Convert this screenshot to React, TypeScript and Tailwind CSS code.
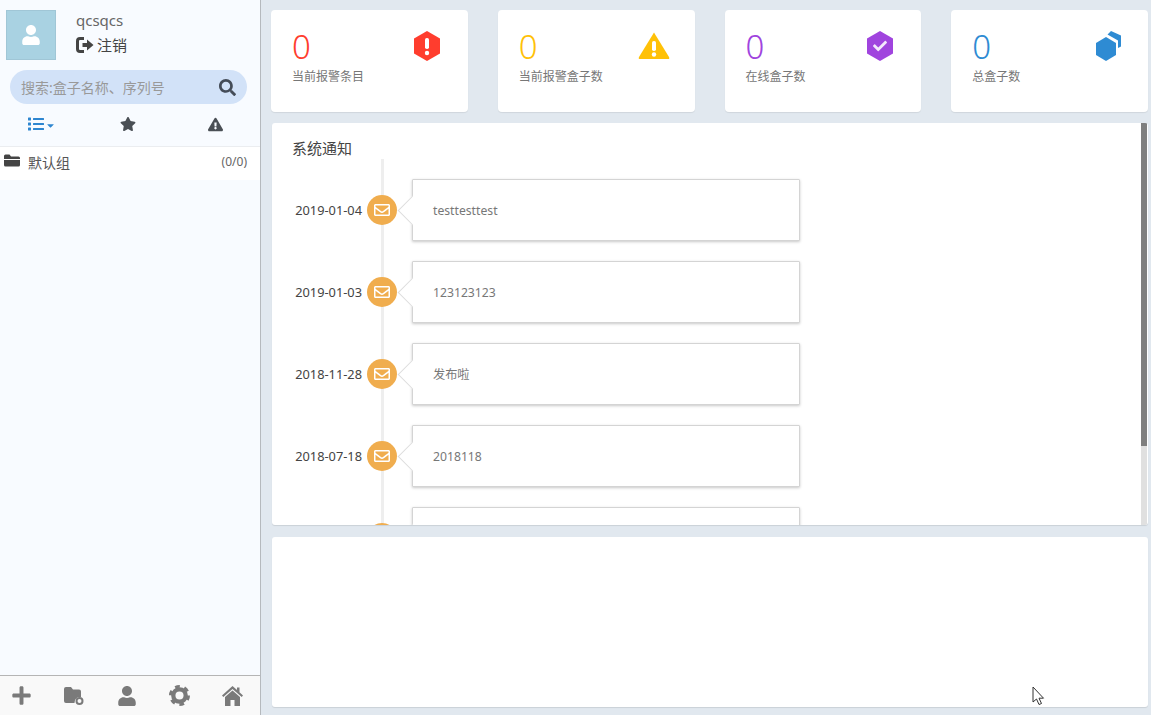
import React from 'react';
import { FaUser, FaSearch, FaList, FaCaretDown, FaStar, FaExclamationTriangle, FaPlus, FaRegEnvelope, FaCheck } from 'react-icons/fa';

const HEX = '15,0 28,7.5 28,22.5 15,30 2,22.5 2,7.5';

const StatCard = ({ value, label, color, icon }: { value: string; label: string; color: string; icon: React.ReactNode }) => (
    <div className="h-[102px] bg-white rounded-[4px] shadow-[0_1px_1px_rgba(0,0,0,0.08)] pl-[21px] pr-[26px] pt-[16px] flex justify-between">
        <div>
            <div className={`text-[33px] leading-[42px] font-light ${color}`}>{value}</div>
            <div className="text-[12px] leading-[18px] text-[#777]">{label}</div>
        </div>
        <div className="w-[30px] h-[30px] mt-[5px]">{icon}</div>
    </div>
);

const Notice = ({ date, text }: { date: string; text: string }) => (
    <div className="flex items-center h-[62px] mb-[20px] shrink-0">
        <div className="w-[70px] pt-[2px] text-[12.8px] text-[#444] text-right whitespace-nowrap">{date}</div>
        <div className="ml-[5px] w-[30px] h-[30px] rounded-full bg-[#f0ad4e] flex items-center justify-center relative z-10">
            <FaRegEnvelope className="text-white text-[16px]" />
        </div>
        <div className="ml-[15px] w-[388px] h-[62px] relative bg-white border border-[#d4d4d4] rounded-[1px] shadow-[0_1px_3px_rgba(0,0,0,0.22)] flex items-center pl-[20px] pt-[2px] text-[12.2px] text-[#777]">
            <div className="absolute left-[-11px] top-[20px] w-[21px] h-[21px] rotate-45 bg-white border-l border-b border-[#ddd]" />
            <span className="relative">{text}</span>
        </div>
    </div>
);

export default function App() {
    const notices = [
        { date: '2019-01-04', text: 'testtesttest' },
        { date: '2019-01-03', text: '123123123' },
        { date: '2018-11-28', text: '发布啦' },
        { date: '2018-07-18', text: '2018118' },
        { date: '', text: '' },
    ];

    return (
        <div className="relative flex w-[1151px] h-[715px] overflow-hidden bg-[#e1e8ef] font-['Noto_Sans','Noto_Sans_CJK_SC',sans-serif]">
            <aside className="w-[261px] shrink-0 h-full bg-[#f8fbff] border-r border-[#b5b9bd] flex flex-col">
                <div className="flex pl-[6px] pt-[10px] h-[70px]">
                    <div className="w-[50px] h-[50px] bg-[#a9d2e2] border border-[#a0c6d6] flex items-center justify-center">
                        <FaUser className="text-white text-[20px]" />
                    </div>
                    <div className="ml-[20px]">
                        <div className="text-[15px] leading-[22px] -mt-[1px] text-[#666]">qcsqcs</div>
                        <div className="flex items-center mt-[3px] text-[15px] leading-[22px] text-[#444]">
                            <svg viewBox="0 0 18 16" className="w-[18px] h-[16px] mr-[3px]">
                                <path d="M8 1.5 H4 Q1.5 1.5 1.5 4 V12 Q1.5 14.5 4 14.5 H8" fill="none" stroke="#444" strokeWidth="3" />
                                <path d="M6.5 6 H11 V2.5 L17.5 8 L11 13.5 V10 H6.5 Z" fill="#444" />
                            </svg>
                            注销
                        </div>
                    </div>
                </div>
                <div className="ml-[10px] w-[237px] h-[34px] rounded-full bg-[#d2e2f8] flex items-center justify-between pl-[11px] pr-[11px]">
                    <span className="text-[14px] text-[#999]">搜索:盒子名称、序列号</span>
                    <FaSearch className="text-[17px] text-[#444c58]" />
                </div>
                <div className="h-[43px] pb-[2px] flex border-b border-[#ebedf0]">
                    <div className="w-[86px] pl-[28px] flex items-center text-[#2e86d0]">
                        <FaList className="text-[16px]" />
                        <FaCaretDown className="text-[11px] ml-[1px] mt-[3px]" />
                    </div>
                    <div className="w-[84px] pl-[34px] flex items-center text-[#4a4f55]">
                        <FaStar className="text-[16px]" />
                    </div>
                    <div className="pl-[38px] flex items-center text-[#4a4f55]">
                        <FaExclamationTriangle className="text-[15px]" />
                    </div>
                </div>
                <div className="h-[33px] pb-[3px] bg-white flex items-center justify-between pl-[4px] pr-[13px]">
                    <div className="flex items-center">
                        <svg viewBox="0 0 16 13" className="w-[16px] h-[13px] mb-[3px]">
                            <path d="M0 2 Q0 0.5 1.5 0.5 H5.5 L7 2.5 H14.5 Q16 2.5 16 4 V5 H0 Z" fill="#444" />
                            <path d="M0 6 H16 V11 Q16 12.5 14.5 12.5 H1.5 Q0 12.5 0 11 Z" fill="#444" />
                        </svg>
                        <span className="ml-[8px] text-[14px] text-[#555]">默认组</span>
                    </div>
                    <span className="text-[12px] text-[#666]">(0/0)</span>
                </div>
                <div className="flex-1" />
                <div className="h-[40px] bg-[#f9f9f9] border-t border-[#b5b5b5] flex items-center text-[#7a7a7a]">
                    <div className="w-[42px] flex justify-center"><FaPlus className="text-[21px]" /></div>
                    <div className="ml-[5px] w-[53px] flex justify-center">
                        <svg viewBox="0 0 20 18" className="w-[20px] h-[18px]">
                            <path d="M0 2 Q0 0 2 0 H7 L9 2.5 H15 Q17 2.5 17 4.5 V10 A5.5 5.5 0 0 0 10.5 16 H2 Q0 16 0 14 Z" fill="#7a7a7a" />
                            <circle cx="15.5" cy="14" r="3" fill="none" stroke="#7a7a7a" strokeWidth="2" />
                        </svg>
                    </div>
                    <div className="w-[53px] flex justify-center"><FaUser className="text-[20px]" /></div>
                    <div className="w-[53px] flex justify-center">
                        <svg viewBox="0 0 22 22" className="w-[21px] h-[21px]">
                            <circle cx="11" cy="11" r="6.5" fill="none" stroke="#7a7a7a" strokeWidth="4.5" />
                            <circle cx="11" cy="11" r="9.5" fill="none" stroke="#7a7a7a" strokeWidth="3" strokeDasharray="5 4.95" />
                        </svg>
                    </div>
                    <div className="w-[53px] flex justify-center">
                        <svg viewBox="0 0 21 20" className="w-[21px] h-[20px]">
                            <path d="M10.5 0 L15 4 V1.5 H17.5 V6.2 L21 9.5 L19.7 11 L10.5 3 L1.3 11 L0 9.5 Z" fill="#7a7a7a" />
                            <path d="M10.5 4.5 L18 11 V20 H12.5 V14 H8.5 V20 H3 V11 Z" fill="#7a7a7a" />
                        </svg>
                    </div>
                </div>
            </aside>

            <main className="flex-1 min-w-0 flex flex-col pt-[10px] pl-[10px] pr-[3px] pb-[8px]">
                <div className="grid grid-cols-4 gap-[30px]">
                    <StatCard value="0" label="当前报警条目" color="text-[#ff3d2e]" icon={
                        <svg viewBox="0 0 30 30" className="w-full h-full">
                            <polygon points={HEX} fill="#ff3d2e" />
                            <rect x="13" y="7" width="4" height="11" rx="1.8" fill="#fff" />
                            <circle cx="15" cy="22" r="2.2" fill="#fff" />
                        </svg>
                    } />
                    <StatCard value="0" label="当前报警盒子数" color="text-[#ffc107]" icon={
                        <svg viewBox="0 0 30 30" className="w-full h-full overflow-visible">
                            <path d="M15 1.5 L30 26 Q31 28 29 28 H1 Q-1 28 0 26 Z" fill="#ffc107" />
                            <rect x="13" y="10" width="4" height="10" rx="1.8" fill="#fff" />
                            <circle cx="15" cy="23.5" r="2.2" fill="#fff" />
                        </svg>
                    } />
                    <StatCard value="0" label="在线盒子数" color="text-[#a044de]" icon={
                        <div className="relative w-full h-full">
                            <svg viewBox="0 0 30 30" className="w-full h-full">
                                <polygon points={HEX} fill="#a044de" />
                            </svg>
                            <FaCheck className="absolute left-[8px] top-[8px] text-[14px] text-[#f3e8fb]" />
                        </div>
                    } />
                    <StatCard value="0" label="总盒子数" color="text-[#2e8bd3]" icon={
                        <svg viewBox="0 0 30 30" className="w-full h-full">
                            <polygon points="19,0 29,4.5 29,15.5 26,17 26,9.5 15.5,3.5" fill="#2e8bd3" />
                            <polygon points="14,6 24,12 24,24 14,30 4,24 4,12" fill="#2e8bd3" />
                        </svg>
                    } />
                </div>

                <section className="ml-[1px] mt-[11px] h-[402px] bg-white rounded-[3px] shadow-[0_1px_1px_rgba(0,0,0,0.1)] flex overflow-hidden">
                    <div className="flex-1 min-w-0 pl-[20px] pt-[14px] overflow-hidden">
                        <div className="text-[15px] leading-[22px] text-[#444]">系统通知</div>
                        <div className="relative flex flex-col pt-[20px]">
                            <div className="absolute left-[89px] top-0 bottom-0 w-[3px] bg-[#eeeeee]" />
                            {notices.map((n, i) => <Notice key={i} date={n.date} text={n.text} />)}
                        </div>
                    </div>
                    <div className="w-[6px] mr-[1px] bg-[#e0e0e0] shrink-0">
                        <div className="h-[323px] bg-[#7f7f7f]" />
                    </div>
                </section>

                <section className="ml-[1px] mt-[12px] flex-1 bg-white rounded-[3px] shadow-[0_1px_1px_rgba(0,0,0,0.1)]" />
            </main>

            <svg viewBox="0 0 13 20" className="absolute left-[1032px] top-[686px] w-[13px] h-[20px]">
                <path d="M1 1 V16 L4.5 13 L7 18.5 L9.5 17.5 L7 12.2 H11.5 Z" fill="#fff" stroke="#333" strokeWidth="1" />
            </svg>
        </div>
    );
}
